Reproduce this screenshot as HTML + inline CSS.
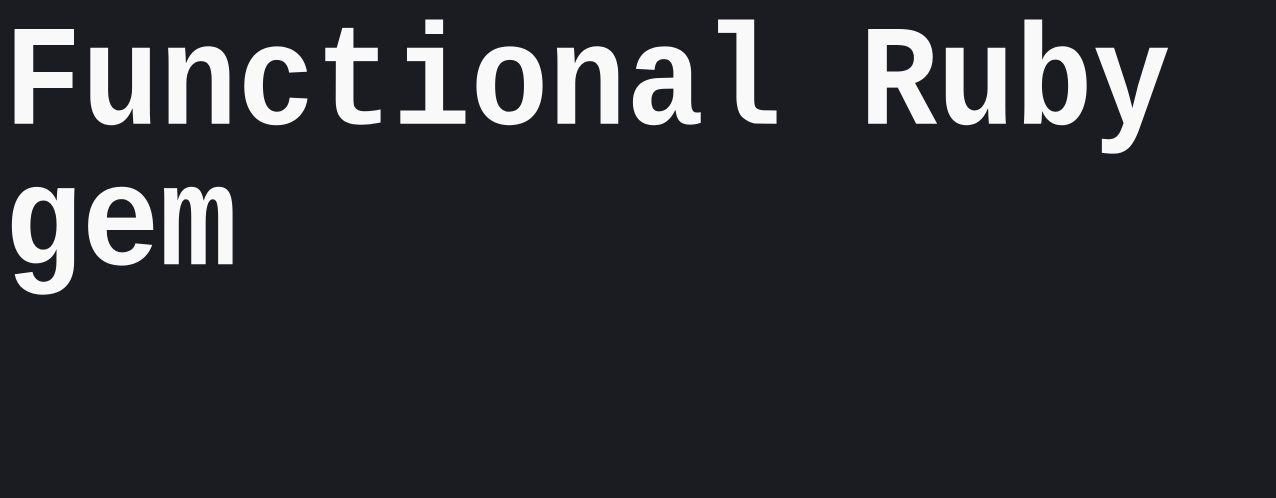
<!DOCTYPE html>
<html><head><style>
html,body{margin:0;padding:0;width:1276px;height:498px;overflow:hidden;background:#1b1c21;}
h1{position:absolute;left:4px;top:17px;margin:0;width:1300px;font-family:"Liberation Mono",monospace;font-weight:bold;font-size:120px;line-height:117px;color:#f9f9f9;transform:scale(1.08,1.2);transform-origin:0 0;white-space:pre;}
</style></head><body>
<h1>Functional Ruby
gem</h1>
</body></html>
